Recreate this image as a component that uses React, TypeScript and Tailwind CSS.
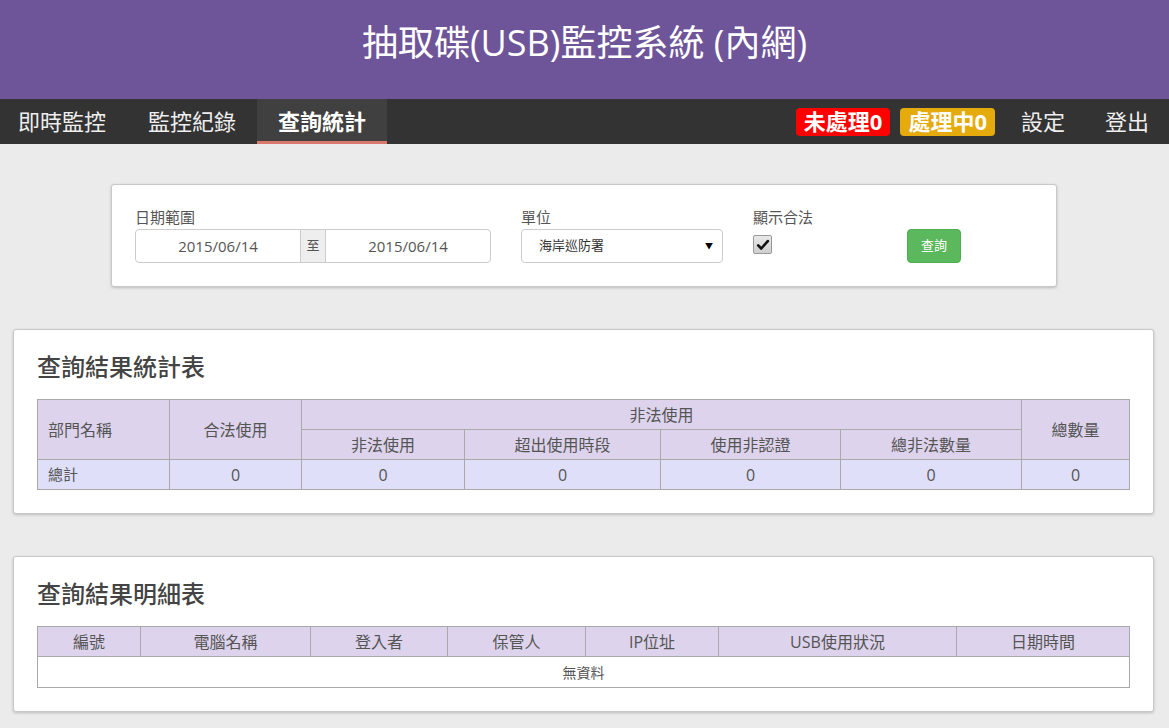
const font = { fontFamily: '"Open Sans", "Noto Sans CJK TC", sans-serif' };

function StatTable() {
  const th = "border border-[#a9a9a9] bg-[#ddd3ec] font-normal h-[30px] p-0";
  const td = "border border-[#a9a9a9] bg-[#dfdff9] h-[30px] text-center p-0";
  return (
    <table className="w-full border-collapse text-[16px] text-[#555] table-fixed">
      <colgroup>
        <col className="w-[132px]" />
        <col className="w-[132px]" />
        <col className="w-[163px]" />
        <col className="w-[196px]" />
        <col className="w-[180px]" />
        <col className="w-[181px]" />
        <col />
      </colgroup>
      <thead>
        <tr>
          <th rowSpan={2} className={`${th} text-left pl-[10px]`}>部門名稱</th>
          <th rowSpan={2} className={th}>合法使用</th>
          <th colSpan={4} className={th}>非法使用</th>
          <th rowSpan={2} className={th}>總數量</th>
        </tr>
        <tr>
          <th className={th}>非法使用</th>
          <th className={th}>超出使用時段</th>
          <th className={th}>使用非認證</th>
          <th className={th}>總非法數量</th>
        </tr>
      </thead>
      <tbody>
        <tr>
          <td className={`${td} pl-[10px] text-[15px]`} style={{ textAlign: "left" }}>總計</td>
          {[0, 0, 0, 0, 0, 0].map((n, i) => (
            <td key={i} className={td}>{n}</td>
          ))}
        </tr>
      </tbody>
    </table>
  );
}

function DetailTable() {
  const th = "border border-[#a9a9a9] bg-[#ddd3ec] font-normal h-[30px] p-0 text-center";
  const cols = ["編號", "電腦名稱", "登入者", "保管人", "IP位址", "USB使用狀況", "日期時間"];
  return (
    <table className="w-full border-collapse text-[16px] text-[#555] table-fixed">
      <colgroup>
        <col className="w-[103px]" />
        <col className="w-[170px]" />
        <col className="w-[137px]" />
        <col className="w-[138px]" />
        <col className="w-[133px]" />
        <col className="w-[238px]" />
        <col />
      </colgroup>
      <thead>
        <tr>
          {cols.map((c) => (
            <th key={c} className={th}>{c}</th>
          ))}
        </tr>
      </thead>
      <tbody>
        <tr>
          <td colSpan={7} className="border border-[#a9a9a9] bg-white h-[31px] text-center text-[14px] p-0">
            無資料
          </td>
        </tr>
      </tbody>
    </table>
  );
}

export default function App() {
  return (
    <div className="min-h-screen bg-[#ebebeb] pb-10" style={font}>
      {/* Header */}
      <header className="h-[99px] bg-[#6e5499] flex items-center justify-center pb-[14px]">
        <h1 className="text-white text-[36px] font-normal">抽取碟(USB)監控系統 (內網)</h1>
      </header>

      {/* Nav */}
      <nav className="h-[45px] bg-[#333333] flex items-stretch text-[22px] text-[#eeeeee]">
        <a className="pl-[18px] pr-[21px] flex items-center">即時監控</a>
        <a className="px-[21px] flex items-center">監控紀錄</a>
        <a className="px-[21px] flex items-center bg-[#404040] font-bold text-white border-b-[3px] border-[#d9786c] pt-[3px]">查詢統計</a>
        <div className="ml-auto flex items-center gap-[10px] mr-[6px]">
          <span className="bg-[#ff0000] text-white font-bold rounded-[4px] h-[28px] px-[8px] flex items-center">未處理0</span>
          <span className="bg-[#e5aa0b] text-white font-bold rounded-[4px] h-[28px] px-[8px] flex items-center">處理中0</span>
        </div>
        <a className="px-5 flex items-center">設定</a>
        <a className="px-5 flex items-center">登出</a>
      </nav>

      {/* Filter */}
      <div className="mt-10 ml-[111px] w-[946px] bg-white border border-[#c8c8c8] rounded-[3px] shadow-[0_1px_3px_rgba(0,0,0,0.2)] pl-[23px] pr-6 pt-[22px] pb-[23px] flex items-end text-[#555]">
        <div className="w-[356px]">
          <div className="text-[15px] leading-[20px] mb-[2px]">日期範圍</div>
          <div className="flex h-[34px] border border-[#ccc] rounded-[4px] text-[15px]">
            <div className="flex-1 flex items-center justify-center">2015/06/14</div>
            <div className="w-[26px] bg-[#eeeeee] border-x border-[#ccc] flex items-center justify-center text-[13px]">至</div>
            <div className="flex-1 flex items-center justify-center">2015/06/14</div>
          </div>
        </div>
        <div className="w-[202px] ml-[30px]">
          <div className="text-[15px] leading-[20px] mb-[2px]">單位</div>
          <div className="h-[34px] border border-[#ccc] rounded-[4px] flex items-center justify-between pl-[17px] pr-[9px] text-[13px] text-[#333]">
            <span>海岸巡防署</span>
            <span className="text-[8px] text-black">▼</span>
          </div>
        </div>
        <div className="w-[154px] ml-[30px] self-stretch flex flex-col">
          <div className="text-[15px] leading-[20px] mb-[2px]">顯示合法</div>
          <div className="mt-[6px] w-[19px] h-[19px] rounded-[2px] border border-[#999] bg-gradient-to-b from-[#e8e8e8] to-[#cfcfcf] flex items-center justify-center">
            <svg viewBox="0 0 16 16" className="w-[14px] h-[14px]">
              <path d="M2.5 8.5 L6 12 L13.5 3.5" fill="none" stroke="#111" strokeWidth="3" strokeLinecap="round" strokeLinejoin="round" />
            </svg>
          </div>
        </div>
        <button className="w-[54px] h-[34px] bg-[#5cb85c] border border-[#4cae4c] rounded-[4px] text-white text-[13px]">查詢</button>
      </div>

      {/* Stats */}
      <section className="mt-[42px] mx-[13px] w-[1141px] bg-white border border-[#c8c8c8] rounded-[3px] shadow-[0_1px_3px_rgba(0,0,0,0.2)] px-[23px] pt-[19px] pb-[23px]">
        <h3 className="text-[24px] leading-[36px] text-[#444] mb-[14px] font-medium">查詢結果統計表</h3>
        <StatTable />
      </section>

      {/* Details */}
      <section className="mt-[42px] mx-[13px] w-[1141px] bg-white border border-[#c8c8c8] rounded-[3px] shadow-[0_1px_3px_rgba(0,0,0,0.2)] px-[23px] pt-[19px] pb-[23px]">
        <h3 className="text-[24px] leading-[36px] text-[#444] mb-[14px] font-medium">查詢結果明細表</h3>
        <DetailTable />
      </section>
    </div>
  );
}
